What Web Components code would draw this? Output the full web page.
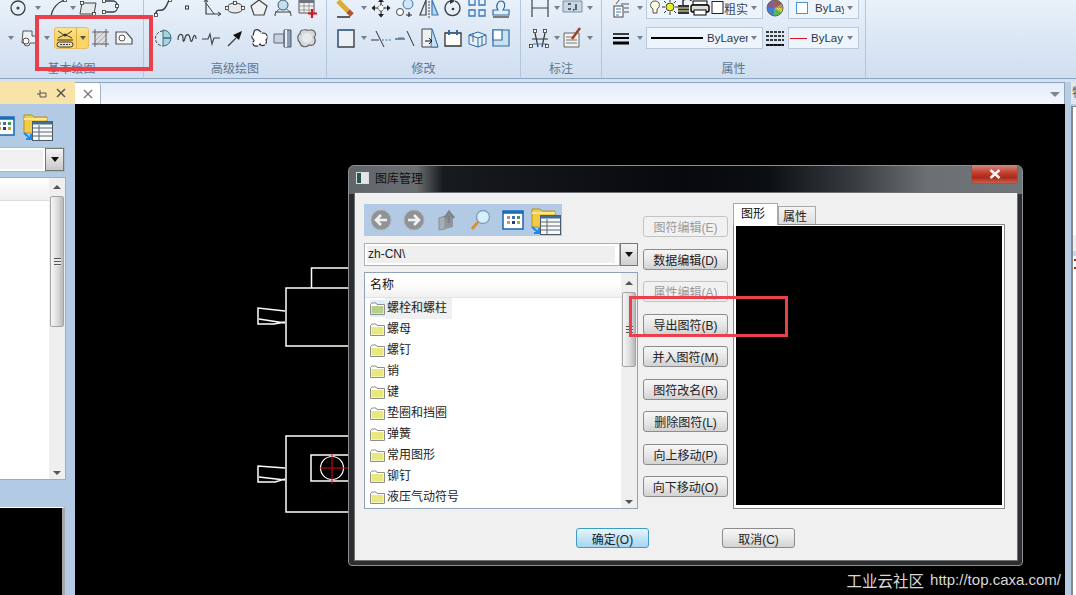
<!DOCTYPE html>
<html lang="zh-CN">
<head>
<meta charset="utf-8">
<title>CAXA</title>
<style>
  html, body { margin: 0; height: 100%; overflow: hidden; background: #000; }
  body { font: 12px "Liberation Sans", "Noto Sans CJK SC", sans-serif; }
</style>
</head>
<body>
<cad-app></cad-app>
<script>
const N = 'stroke="#3c3f44" fill="none"';
const B = 'stroke="#3a77b4" fill="none"';
const nodes = (pts) => pts.map(p => `<rect x="${p[0]-1.5}" y="${p[1]-1.5}" width="3" height="3" fill="#fff" stroke="#333" stroke-width=".8"/>`).join("");
const wedge = (a, b, c) => {
  const r = Math.PI / 180, x = (d) => (11 + 8 * Math.cos(d * r)).toFixed(1), y = (d) => (11 + 8 * Math.sin(d * r)).toFixed(1);
  return `<path d="M11 11L${x(a)} ${y(a)}A8 8 0 0 1 ${x(b)} ${y(b)}Z" fill="${c}"/>`;
};

// ribbon and dialog icons, all on a 22x22 box
const ICONS = {
  nick: `<path d="M0 6L5 1" ${N}/>`,
  circle: `<circle cx="11" cy="11" r="7" ${N} stroke-width="1.3"/><circle cx="11" cy="11" r="1.6" fill="#444"/>`,
  arc: `<path d="M4 20C5 11 11 5 18 3" ${N} stroke-width="1.3"/>${nodes([[18,3]])}`,
  rect: `<path d="M5 6H19L17 17H3Z" fill="#e6e9ec" stroke="#444"/>${nodes([[5,6],[17,17]])}`,
  hook: `<path d="M4 4H12C18 4 18 15 12 15H5" ${N} stroke-width="1.3"/>${nodes([[3,4],[16,9],[3,15]])}`,
  region: `<path d="M6 4H15V9H19V16H13A3 3 0 0 1 7 16H5Z" fill="#eef1f3" stroke="#555"/><circle cx="9" cy="14" r="3" fill="#fff" stroke="#555"/>`,
  hatch: `<path d="M5 4H18V18H5Z" fill="#dcdce0"/><path d="M5 10L11 4M5 15L16 4M7 18L18 7M12 18L18 12" stroke="#999" stroke-width=".7"/><path d="M3 5H20M3 17H20M6 2V20M17 2V20" stroke="#444" stroke-width=".8"/>`,
  boundary: `<path d="M4 5H14L20 12V17H4Z" fill="#f4f5f6" stroke="#555" stroke-width="1.2"/><circle cx="10" cy="11" r="3" fill="#fff" stroke="#555"/>`,
  bolts: `<path d="M4 3L10 7L4 10M18 3L12 7L18 10" ${N}/><circle cx="11" cy="7" r="1.5" fill="#333"/><path d="M3 12H19" stroke="#333"/><rect x="3" y="14" width="16" height="5" rx="2.5" fill="#f3e4a8" stroke="#333"/><path d="M6 16.500H16" stroke="#333" stroke-dasharray="2 1"/>`,
  spline: `<path d="M3 19C5 8 9 17 13 11S15 5 18 3" ${N} stroke-width="1.4"/>${nodes([[4,18],[18,3]])}`,
  dot: `<rect x="9.500" y="9" width="3" height="3" fill="#fff" stroke="#333"/>`,
  axes: `<path d="M6 3V17H20" ${N} stroke-width="1.2"/><path d="M6 6L14 17" ${N}/><path d="M4 5L6 2L8 5M18 15L21 17L18 19" ${N}/>`,
  ellipse: `<ellipse cx="11" cy="11" rx="8" ry="5" fill="#e7eaec" stroke="#444"/>${nodes([[3,11],[19,11],[11,6]])}`,
  pentagon: `<path d="M11 3L19 9L16 18H6L3 9Z" fill="#eef1f2" stroke="#444" stroke-width="1.2"/>`,
  cone: `<circle cx="11" cy="8" r="5" fill="#bfe0ec" stroke="#456"/><path d="M3 19C3 13 7 14 7 12M19 19C19 13 15 14 15 12M3 15H19" ${N}/>`,
  tablePlus: `<path d="M3 2H18V16H3Z" fill="#f1f1f1" stroke="#555"/><path d="M3 2H18V6H3Z" fill="#70747c"/><path d="M3 9H18M3 13H18M8 6V16M13 6V16" stroke="#888" stroke-width=".8"/><path d="M16 12V21M12 16.500H21" stroke="#d8141e" stroke-width="2.200"/>`,
  pie: `<path d="M11 4A7.500 7.500 0 1 0 11 19" ${N} stroke-dasharray="3 1.500"/><path d="M11 11H19A8 8 0 0 1 11 19Z M11 11V3A8 8 0 0 1 19 11Z" fill="#a8d5da" stroke="#3a6f8c"/>`,
  wave: `<path d="M2 13C2 6 7 6 7 11S8 15 9 11S13 6 14 11S16 15 17 11S20 8 20 12" ${N} stroke-width="1.2"/>`,
  pulse: `<path d="M2 12H8L10 7L12 17L14 11H20" ${N} stroke-width="1.1"/>`,
  arrow: `<path d="M4 19L12 11" ${N} stroke-width="1.2"/><path d="M18 4L15 13L9 8Z" fill="#111"/>`,
  blob: `<path d="M7 3C12 1 13 7 15 6C20 6 20 12 18 13C20 17 14 21 12 17C9 21 4 19 5 15C8 13 3 12 4 9C6 9 5 5 7 3Z" fill="#fff" stroke="#333" stroke-width="1.2" stroke-dasharray="7 1"/>`,
  cylinder: `<path d="M2 7H12V16H2Z" fill="#c6d4e0" stroke="#667"/><path d="M12 3H19V20H12Z" fill="#8aa1b5" stroke="#556"/><path d="M14 3V20" stroke="#e7eef4" stroke-width="2"/>`,
  cloud: `<path d="M7 3C11 2 12 4 14 3C19 2 21 8 18 10C21 14 18 20 13 18C10 21 5 20 4 16C1 13 1 8 4 7C4 5 5 3 7 3Z" fill="#d5d9dc" stroke="#666" stroke-width="1.2"/><circle cx="11" cy="11" r="5" fill="#e8eaec"/>`,
  eraser: `<path d="M3 4L13 14" stroke="#d8ad3c" stroke-width="5"/><path d="M13 14L17 18" stroke="#b3522e" stroke-width="5"/><path d="M2 20H15" stroke="#222" stroke-width="1.4"/>`,
  move: `<path d="M11 2V20M2 11H20" stroke="#333" stroke-width="1.2"/><path d="M8 5L11 1.500L14 5ZM8 17L11 20.500L14 17ZM5 8L1.500 11L5 14ZM17 8L20.500 11L17 14Z" fill="#222"/><circle cx="11" cy="11" r="3" fill="#fff" stroke="#444" stroke-dasharray="1.500 1"/>`,
  scale: `<circle cx="14" cy="7" r="5" fill="#d4e6f5" stroke="#3a77b4"/><circle cx="6" cy="15" r="3.500" fill="#fff" stroke="#444"/><path d="M12 18H18M15 15V20" stroke="#222" stroke-width="1.2"/>`,
  mirror: `<path d="M8 3V18L2 18Z" fill="none" stroke="#444" stroke-width="1.2"/><path d="M11 1V21" stroke="#444" stroke-dasharray="2 1"/><path d="M14 3V18L20 18Z" fill="#b9d6ee" stroke="#3a77b4" stroke-width="1.2"/>`,
  rotate: `<path d="M13 4A7.500 7.500 0 1 1 8 4" ${N} stroke-width="1.3"/><path d="M8 1L13 4L8 7" fill="#333"/><circle cx="11" cy="12" r="1.300" fill="#333"/>`,
  array: `<path d="M3 2H9V8H3ZM13 2H19V8H13ZM3 13H9V19H3ZM13 13H19V19H13Z" ${B} stroke-width="1.3"/>`,
  stamp: `<path d="M3 18V13H8C5 9 8 4 11 4C15 4 16 9 13 13H19V18Z" fill="none" stroke="#2f6aa8" stroke-width="1.2"/><path d="M3 20H19" stroke="#333" stroke-width="1.200"/>`,
  frame: `<path d="M3 3H19V20H3Z" fill="#eaf0f3"/><path d="M3 3H19V20H3Z" fill="none" stroke="#3a3f44" stroke-width="1.4"/><path d="M3 3H19M3 3V20" stroke="#3a77b4" stroke-width="1.600" stroke-dasharray="2 1"/>`,
  trim: `<path d="M1 13H9" stroke="#333"/><path d="M12 13H21" stroke="#3a77b4" stroke-dasharray="2 1.500"/><path d="M6 4L14 20" stroke="#333"/>`,
  extend: `<path d="M1 12H11" stroke="#333"/><path d="M13 4L20 19" stroke="#333"/><path d="M4 11H10" stroke="#3a77b4"/>`,
  docArrow: `<path d="M4 2H14L20 20H4Z" fill="#eef1f2" stroke="#3d3f44"/><path d="M14 2L20 20H13Z" fill="#c8e0ee" stroke="#3a77b4"/><path d="M7 14H14M11 11L14 14L11 17" stroke="#111" fill="none"/>`,
  ticks: `<path d="M3 6H19V19H3Z" fill="#fff" stroke="#333" stroke-width="1.3"/><path d="M7 3V8M15 3V8" stroke="#2b6cb0" stroke-width="2"/>`,
  box3d: `<path d="M3 8L12 5L20 8V17L12 20L3 17Z" fill="#e8f0f5" stroke="#2f6aa8"/><path d="M3 8L12 11V20M12 11L20 8M7 6V15M16 9V18" stroke="#2f6aa8" fill="none"/>`,
  panes: `<path d="M3 3H19V19H3Z" fill="#c8e2ef" stroke="#2f6aa8" stroke-width="1.200"/><path d="M3 3H12V13H3Z" fill="#fff" stroke="#2f6aa8" stroke-width="1.200"/>`,
  dim: `<path d="M3 3V20M19 3V20" stroke="#444" stroke-width="1.200"/><path d="M3 11H19" stroke="#444"/>`,
  dimBox: `<path d="M1 4H20V15H1Z" fill="#c9d6e3" stroke="#7f8fa0"/><path d="M6 7H9M6 12H9M14 7V13" stroke="#26384a" stroke-width="1.400"/><rect x="11" y="12" width="1.500" height="1.500" fill="#26384a"/>`,
  crossDots: `<path d="M6 6L9 20M16 6L13 20M3 12H19" stroke="#333" stroke-width="1.200" fill="none"/><path d="M4 17H18" stroke="#3a77b4"/>${nodes([[6,4],[16,4],[2,19],[18,19]])}`,
  note: `<path d="M2 6H17V20H2Z" fill="#f1f1ed" stroke="#666"/><path d="M4 10H13M4 13H15M4 16H15" stroke="#777"/><path d="M18 1L10 12" stroke="#a33f2b" stroke-width="2.500"/>`,
  listIcon: `<rect x="4" y="9" width="9" height="11" fill="#fff" stroke="#444"/><path d="M6 12H11M6 15H11M6 18H9" stroke="#3a77b4"/><path d="M6 7L10 2M11 7H19M14 11H19M14 15H19" stroke="#555" fill="none"/>`,
  widths: `<path d="M3 7H19" stroke="#000" stroke-width="1.500"/><path d="M3 11H19" stroke="#000" stroke-width="2"/><path d="M3 16H19" stroke="#000" stroke-width="3"/>`,
  wheel: `${wedge(180,255,"#9a3ab0")}${wedge(255,330,"#c63a3a")}${wedge(330,395,"#e8c43a")}${wedge(35,100,"#58b848")}${wedge(100,180,"#3f7fd4")}<circle cx="11" cy="11" r="8" fill="none" stroke="#666"/><path d="M3 11A8 8 0 0 1 19 11" fill="#777" opacity=".55"/>`,
  ltype: `<path d="M2 5H20M2 9H20M2 13H20M2 18H20" stroke="#000" stroke-width="1.300" stroke-dasharray="3 1"/><path d="M2 18H20" stroke="#000" stroke-width="1.500"/>`,
  back: `<circle cx="11" cy="11" r="10" fill="#8f9398"/><circle cx="11" cy="11" r="10" fill="none" stroke="#aeb2b6"/><path d="M6 11H17M11 6L6 11L11 16" fill="none" stroke="#f1f1f1" stroke-width="2.600"/>`,
  forward: `<circle cx="11" cy="11" r="10" fill="#8f9398"/><circle cx="11" cy="11" r="10" fill="none" stroke="#aeb2b6"/><path d="M5 11H16M11 6L16 11L11 16" fill="none" stroke="#f1f1f1" stroke-width="2.600"/>`,
  upDoc: `<path d="M3 9L9 7V20L3 21Z" fill="#a8adb4" stroke="#8a8e94"/><path d="M9 7H17V18L9 20Z" fill="#8f959c"/><path d="M13 14V6M9 9L13 3L18 9" fill="none" stroke="#7c8289" stroke-width="2.600"/>`,
  magnifier: `<circle cx="14" cy="8" r="6.500" fill="#d7eefb" stroke="#7a9fbe" stroke-width="1.300"/><path d="M9 13L3 20" stroke="#e08c2a" stroke-width="2.800"/>`,
  gridWin: `<path d="M1 2H21V20H1Z" fill="#fff" stroke="#1668b0" stroke-width="1.500"/><path d="M1 3.500H21" stroke="#1668b0" stroke-width="2.500"/><path d="M5 7H8V10H5Z" fill="#a08fa0"/><path d="M10 7H13V10H10Z" fill="#3d70b0"/><path d="M15 7H18V10H15Z" fill="#3c9a50"/><path d="M5 12H8V15H5Z" fill="#c89a60"/><path d="M10 12H13V15H10Z" fill="#243c80"/><path d="M15 12H18V15H15Z" fill="#c8a040"/>`
};
const FOLDER_TABLE = `<svg width="30" height="30" viewBox="0 0 30 30"><path d="M1 4H9L11 6H24V22H1Z" fill="#f4cb45" stroke="#b3902a"/><path d="M1 8H24" stroke="#fbe88e" stroke-width="2"/><rect x="9.500" y="10.500" width="20" height="19" fill="#f8f8f8" stroke="#4a5a68"/><path d="M9.500 12H29.500" stroke="#3f6f96" stroke-width="3"/><path d="M10 17H29M10 21H29M10 25H29M16 14V29" stroke="#5a6670"/><path d="M1 22L8 28M8 23V28H3" fill="none" stroke="#1e88e8" stroke-width="2"/></svg>`;
const icon = (name) => `<svg width="22" height="22" viewBox="0 0 22 22" style="flex:none;display:block">${ICONS[name] || ""}</svg>`;

class RibbonGroup extends HTMLElement {
  connectedCallback() {
    const shadow = this.attachShadow({ mode: "open" });
    shadow.innerHTML = `
      <style>
        :host { display: flex; flex-direction: column; flex: none; box-sizing: border-box; height: 78px;
          padding-left: var(--pad, 7px); border-right: 1px solid #b4c6da; }
        .rows { display: flex; flex-direction: column; gap: 8px; margin-top: -3px; }
        .label { margin-top: auto; height: 20px; line-height: 20px; margin-left: calc(0px - var(--pad, 7px));
          text-align: center; color: #5f7691; font-size: 12px; font-family: "Noto Sans CJK SC", sans-serif; }
      </style>
      <div class="rows"><slot></slot></div>
      <div class="label">${this.getAttribute("label")}</div>`;
  }
}

class RibbonRow extends HTMLElement {
  connectedCallback() {
    this.attachShadow({ mode: "open" }).innerHTML = `
      <style>:host { display: flex; align-items: center; height: 22px; }</style><slot></slot>`;
  }
}

class ToolBtn extends HTMLElement {
  connectedCallback() {
    const w = this.getAttribute("w") || 24;
    this.attachShadow({ mode: "open" }).innerHTML = `
      <style>:host { display: flex; align-items: center; justify-content: center; flex: none; width: ${w}px; height: 22px; }</style>
      ${icon(this.getAttribute("icon"))}`;
  }
}

class RibbonArrow extends HTMLElement {
  connectedCallback() {
    const w = this.getAttribute("w") || 11;
    this.attachShadow({ mode: "open" }).innerHTML = `
      <style>
        :host { display: flex; align-items: center; justify-content: center; flex: none; width: ${w}px; height: 22px; }
        i { border: 3.5px solid transparent; border-top: 4px solid #77808c; border-bottom: 0; }
      </style><i></i>`;
  }
}

class SplitBtn extends HTMLElement {
  connectedCallback() {
    this.attachShadow({ mode: "open" }).innerHTML = `
      <style>
        :host { display: flex; flex: none; width: 35px; height: 22px; box-sizing: border-box; border: 1px solid #e2bd62;
          border-radius: 3px; background: linear-gradient(#fde48e, #fcd360 50%, #fbd565); }
        .a { width: 22px; display: flex; justify-content: center; border-right: 1px solid #d9ae4e; margin-left: -1px; }
        .b { flex: 1; display: flex; align-items: center; justify-content: center; }
        i { border: 3.5px solid transparent; border-top: 4px solid #555; border-bottom: 0; }
      </style>
      <div class="a">${icon(this.getAttribute("icon"))}</div><div class="b"><i></i></div>`;
  }
}

class RibbonCombo extends HTMLElement {
  connectedCallback() {
    const w = this.getAttribute("w");
    this.attachShadow({ mode: "open" }).innerHTML = `
      <style>
        :host { display: flex; align-items: center; flex: none; box-sizing: border-box; width: ${w}px; height: 22px;
          border: 1px solid #b9c9dc; background: #eef4fb; color: #2b3a4c; font-size: 11.500px; overflow: hidden; position: relative; }
        .arrow { position: absolute; right: 2px; top: 0; bottom: 0; width: 12px; display: flex; align-items: center; justify-content: center; background: #eef4fb; }
        i { border: 3px solid transparent; border-top: 4px solid #77808c; border-bottom: 0; }
      </style>
      <slot></slot><div class="arrow"><i></i></div>`;
  }
}

class CadRibbon extends HTMLElement {
  connectedCallback() {
    this.attachShadow({ mode: "open" }).innerHTML = `
      <style>
        :host { display: flex; flex: none; height: 79px; box-sizing: border-box; border-bottom: 1px solid #8ea5bf; overflow: hidden;
          background: linear-gradient(#e9f1fa, #dde8f5 45%, #cfdef0); }
      </style><slot></slot>`;
  }
}

class VScroll extends HTMLElement {
  connectedCallback() {
    const t = this.getAttribute("thumb") || 70;
    this.attachShadow({ mode: "open" }).innerHTML = `
      <style>
        :host { display: flex; flex-direction: column; flex: none; width: 16px; background: #efefef; }
        .btn { display: flex; align-items: center; justify-content: center; height: ${this.getAttribute("top") || 19}px; flex: none; }
        .down { height: 12px; margin-top: auto; }
        .up i { border: 4px solid transparent; border-bottom: 4px solid #555; border-top: 0; }
        .down i { border: 4px solid transparent; border-top: 4px solid #555; border-bottom: 0; }
        .thumb { height: ${t}px; box-sizing: border-box; margin: 0 1px; border: 1px solid #a4a4a4; border-radius: 2px;
          background: linear-gradient(90deg, #f6f6f6, #dcdcdc 55%, #b8b8b8); display: flex; align-items: center; justify-content: center; }
        .grip { width: 7px; height: 8px; background: repeating-linear-gradient(#555 0 1px, #e8e8e8 1px 3px); }
      </style>
      <div class="btn up"><i></i></div>
      <div class="thumb"><div class="grip"></div></div>
      <div class="btn down"><i></i></div>`;
  }
}

class SidePanel extends HTMLElement {
  connectedCallback() {
    this.attachShadow({ mode: "open" }).innerHTML = `
      <style>
        :host { display: flex; flex-direction: column; flex: none; width: 75px; height: 513px; background: #b3cae4; box-sizing: border-box; overflow: hidden; }
        .title { flex: none; height: 22px; display: flex; align-items: center; justify-content: flex-end; gap: 9px; padding-right: 9px; background: #f8e3a8; color: #555; }
        .tools { flex: none; height: 43px; display: flex; align-items: center; gap: 8px; }
        .tools .g { margin-left: -7px; }
        .combo { flex: none; display: flex; height: 25px; width: 65px; box-sizing: border-box; background: #fff; border: 1px solid #a9b6c6; border-left: 0; }
        .combo .f { flex: 1; margin: 2px 2px 2px 0; background: #f0f0f0; }
        .combo .b { width: 17px; display: flex; align-items: center; justify-content: center; background: linear-gradient(#f4f4f4, #c8c8c8); border: 1px solid #777; }
        .combo i { border: 4.5px solid transparent; border-top: 5px solid #111; border-bottom: 0; }
        .list { flex: none; margin-top: 5px; width: 66px; height: 303px; box-sizing: border-box; display: flex; border: 1px solid #9eacbd; border-left: 0; background: #fff; }
        .list .c { flex: 1; }
        .list .h { height: 22px; background: linear-gradient(#fff, #eee); border-bottom: 1px solid #ddd; }
        .under { flex: 1; margin-top: 27px; width: 62px; background: #000; border-top: 1px solid #fff; border-right: 3px solid #a6a6a6; }
      </style>
      <div class="title">
        <svg width="11" height="11" viewBox="0 0 11 11"><path d="M1 6H4M4 2V9H10V5H4" fill="none" stroke="#555"/></svg>
        <svg width="10" height="10" viewBox="0 0 10 10"><path d="M1 1L9 9M9 1L1 9" stroke="#555" stroke-width="1.500"/></svg>
      </div>
      <div class="tools"><span class="g">${icon("gridWin")}</span>${FOLDER_TABLE}</div>
      <div class="combo"><div class="f"></div><div class="b"><i></i></div></div>
      <div class="list"><div class="c"><div class="h"></div></div><v-scroll thumb="131" top="18"></v-scroll></div>
      <div class="under"></div>`;
  }
}

class DlgButton extends HTMLElement {
  connectedCallback() {
    const w = this.getAttribute("w") || 85;
    const off = this.hasAttribute("off"), def = this.hasAttribute("default");
    const h = this.getAttribute("h") || 21;
    this.attachShadow({ mode: "open" }).innerHTML = `
      <style>
        :host { display: flex; align-items: center; justify-content: center; flex: none; box-sizing: border-box; width: ${w}px; height: ${h}px;
          border-radius: 3px; font-size: 12px; white-space: nowrap;
          border: 1px solid ${def ? "#3d9cc9" : off ? "#c4c4c4" : "#8c8c8c"};
          color: ${off ? "#9a9a9a" : "#222"};
          background: ${def ? "linear-gradient(#eaf6fd, #c3e4f6 50%, #a6d6f1)" : off ? "#f1f1f1" : "linear-gradient(#f6f6f6, #e8e8e8 50%, #d2d2d2)"}; }
      </style><slot></slot>`;
  }
}

class FolderRow extends HTMLElement {
  connectedCallback() {
    const sel = this.hasAttribute("selected");
    this.attachShadow({ mode: "open" }).innerHTML = `
      <style>
        :host { display: flex; align-items: center; height: 21px; padding-left: 5px; flex: none; color: #222; font-size: 12px; }
        .i { display: flex; padding: 2px 0; ${sel ? "background:#e2eef7;" : ""} }
        .t { padding: 0 5px 0 2px; height: 21px; line-height: 21px; ${sel ? "background:#f0f0f0;" : ""} }
      </style>
      <div class="i"><svg width="15" height="13" viewBox="0 0 15 13"><path d="M.5 2.500L2 1H6L7 2.500H14.500V12.500H.5Z" fill="#fff" stroke="#8e8e8e"/><rect x="1.500" y="4" width="12" height="7.500" fill="${sel ? "#b5d08a" : "#e9e77f"}"/></svg></div>
      <div class="t"><slot></slot></div>`;
  }
}

class LibDialog extends HTMLElement {
  connectedCallback() {
    this.attachShadow({ mode: "open" }).innerHTML = `
      <style>
        :host { position: absolute; left: 273px; top: 61px; width: 675px; height: 401px; box-sizing: border-box; display: flex; flex-direction: column;
          padding: 0 5px 5px 6px; border: 1px solid #8b8f93; border-radius: 6px 6px 4px 4px; font-size: 12px;
          background: linear-gradient(90deg, #60656a 0, #6b6f72 10%, #181b1e 14%, #07090c 50%, #0c0f12 62%, #34383c 74%, #6c7073 86%, #70757a 100%) top / 100% 28px no-repeat, #2c2e30; }
        .bar { flex: none; box-sizing: border-box; height: 27px; padding-bottom: 4px; display: flex; align-items: center; gap: 6px; margin-left: 1px; position: relative; color: #111; font-family: "Noto Sans CJK SC", sans-serif; }
        .winicon { width: 11px; height: 10px; background: linear-gradient(90deg, #27584f 40%, #e4e4e4 40%); border: 1px solid #ddd; }
        .close { position: absolute; right: -1px; top: -1px; width: 47px; height: 19px; box-sizing: border-box; border: 1px solid #8f5a55; border-top: 0; border-radius: 0 0 4px 4px;
          background: linear-gradient(#cf8a80, #c43c2c 45%, #a92a1c 70%, #c9604a); display: flex; align-items: center; justify-content: center; }
        .client { flex: 1; background: #f0f0f0; box-shadow: 0 0 0 1px #6e7174; padding: 11px 0 0 9px; display: flex; flex-direction: column; min-height: 0; }
        .main { display: flex; height: 305px; flex: none; }
        .left { width: 274px; display: flex; flex-direction: column; flex: none; }
        .tb { height: 32px; width: 198px; background: #b3cae4; display: flex; align-items: center; flex: none; }
        .tb span { display: flex; justify-content: center; width: 33px; flex: none; }
        .combo { margin-top: 7px; height: 23px; display: flex; flex: none; }
        .combo .f { flex: 1; box-sizing: border-box; border: 1px solid #a8b0ba; background: #fff; padding: 2px; display: flex; }
        .combo .f b { flex: 1; font-weight: normal; background: #efefef; line-height: 16px; padding-left: 1px; color: #222; margin-right: 2px; }
        .combo .b { width: 18px; box-sizing: border-box; border: 1px solid #777; background: linear-gradient(#f4f4f4, #cfcfcf); display: flex; align-items: center; justify-content: center; }
        .combo i { border: 4px solid transparent; border-top: 5px solid #111; border-bottom: 0; }
        .list { margin-top: 6px; height: 237px; box-sizing: border-box; border: 1px solid #8fa2b6; background: #fff; display: flex; flex: none; overflow: hidden; }
        .c { flex: 1; display: flex; flex-direction: column; }
        .h { height: 25px; flex: none; box-sizing: border-box; padding-left: 5px; line-height: 25px; background: linear-gradient(#fff, #fff 40%, #f1f1f1); border-bottom: 1px solid #e4e4e4; color: #111; font-size: 12px; }
        .mid { display: flex; flex-direction: column; gap: 11.500px; width: 85px; margin-left: 5px; padding-top: 12px; flex: none; }
        .right { display: flex; flex-direction: column; width: 272px; margin-left: 5px; flex: none; }
        .tabs { display: flex; height: 20px; flex: none; align-items: flex-end; }
        .tab { box-sizing: border-box; display: flex; align-items: center; justify-content: center; border: 1px solid #a8a8a8; border-bottom: 0; }
        .tab.on { width: 45px; height: 22px; background: #fff; position: relative; z-index: 1; margin-bottom: -1px; color: #111; padding: 0 5px 4px 0; }
        .tab.off { width: 38px; height: 18px; background: linear-gradient(#f5f5f5, #dcdcdc); color: #222; padding-right: 4px; }
        .view { flex: 1; box-sizing: border-box; border: 1px solid #8a8a8a; background: #fff; padding: 1px 2px 3px 2px; display: flex; }
        .view div { flex: 1; background: #000; }
        .foot { display: flex; margin: 19px 0 0 212px; gap: 73px; }
      </style>
      <div class="bar"><div class="winicon"></div>图库管理
        <div class="close"><svg width="14" height="10" viewBox="0 0 14 10"><path d="M2.500 1L11.500 9M11.500 1L2.500 9" stroke="#f4f4f4" stroke-width="2.600"/></svg></div>
      </div>
      <div class="client">
        <div class="main">
          <div class="left">
            <div class="tb">
              <span>${icon("back")}</span><span>${icon("forward")}</span><span>${icon("upDoc")}</span><span>${icon("magnifier")}</span><span>${icon("gridWin")}</span><span>${FOLDER_TABLE}</span>
            </div>
            <div class="combo"><div class="f"><b>zh-CN\\</b></div><div class="b"><i></i></div></div>
            <div class="list">
              <div class="c">
                <div class="h">名称</div>
                <folder-row selected>螺栓和螺柱</folder-row>
                <folder-row>螺母</folder-row>
                <folder-row>螺钉</folder-row>
                <folder-row>销</folder-row>
                <folder-row>键</folder-row>
                <folder-row>垫圈和挡圈</folder-row>
                <folder-row>弹簧</folder-row>
                <folder-row>常用图形</folder-row>
                <folder-row>铆钉</folder-row>
                <folder-row>液压气动符号</folder-row>
              </div>
              <v-scroll thumb="75" top="19"></v-scroll>
            </div>
          </div>
          <div class="mid">
            <dlg-button off>图符编辑(E)</dlg-button>
            <dlg-button>数据编辑(D)</dlg-button>
            <dlg-button off>属性编辑(A)</dlg-button>
            <dlg-button>导出图符(B)</dlg-button>
            <dlg-button>并入图符(M)</dlg-button>
            <dlg-button>图符改名(R)</dlg-button>
            <dlg-button>删除图符(L)</dlg-button>
            <dlg-button>向上移动(P)</dlg-button>
            <dlg-button>向下移动(O)</dlg-button>
          </div>
          <div class="right">
            <div class="tabs"><div class="tab on">图形</div><div class="tab off">属性</div></div>
            <div class="view"><div></div></div>
          </div>
        </div>
        <div class="foot">
          <dlg-button default w="73" h="20">确定(O)</dlg-button>
          <dlg-button w="73" h="20">取消(C)</dlg-button>
        </div>
      </div>`;
  }
}

class CadCanvas extends HTMLElement {
  connectedCallback() {
    // drawing coordinates are the page's, shifted by the canvas origin
    this.attachShadow({ mode: "open" }).innerHTML = `
      <style>
        :host { display: flex; flex-direction: column; flex: 1; min-width: 0; height: 513px; }
        .strip { flex: none; height: 22px; display: flex; align-items: stretch; box-sizing: border-box; background: linear-gradient(#e2ecf8, #f3f7fc); border-top: 1px solid #8ea5bf; border-right: 1px solid #8ea5bf; position: relative; }
        .tab { width: 25px; background: #fff; border-radius: 0 3px 0 0; border-right: 1px solid #a3b4c8; display: flex; align-items: center; justify-content: center; }
        .chev { position: absolute; right: 4px; top: 9px; border: 5px solid transparent; border-top: 5px solid #7d8792; border-bottom: 0; }
        .black { flex: 1; background: #000; position: relative; overflow: hidden; }
        svg.cad { position: absolute; left: 0; top: 0; }
      </style>
      <div class="strip">
        <div class="tab"><svg width="10" height="10" viewBox="0 0 10 10"><path d="M1 1L9 9M9 1L1 9" stroke="#777" stroke-width="1.300"/></svg></div>
        <div class="chev"></div>
      </div>
      <div class="black">
        <svg class="cad" width="990" height="491" viewBox="75 104 990 491" fill="none" stroke="#fff" stroke-width="1.500">
          <path d="M348 268H311.500V288M348 288H286V346H348"/>
          <path d="M285 311L258 308V324H274L285 322M259 319L285 323"/>
          <path d="M348 436H286V512H348M348 455H311V481H348"/>
          <circle cx="332" cy="468" r="11.500" stroke-width="1.200"/>
          <path d="M285 468L258 466V482H275L285 479M259 477L285 480"/>
          <path d="M332 454V484M320 468H349" stroke="#e3001b" stroke-width="1"/>
        </svg>
        <lib-dialog></lib-dialog>
        <cad-mark></cad-mark>
      </div>`;
  }
}

class CadMark extends HTMLElement {
  connectedCallback() {
    this.attachShadow({ mode: "open" }).innerHTML = `
      <style>
        :host { position: absolute; right: 4px; bottom: 5px; color: #d8d8d8; font-size: 15px; line-height: 20px; white-space: nowrap; display: flex; gap: 6px; align-items: center; }
        b { font-weight: normal; font-size: 15.500px; font-family: "Noto Sans CJK SC", sans-serif; }
      </style><b>工业云社区</b><span>http://top.caxa.com/</span>`;
  }
}

class RightDock extends HTMLElement {
  connectedCallback() {
    this.attachShadow({ mode: "open" }).innerHTML = `
      <style>
        :host { display: flex; flex-direction: column; flex: none; width: 11px; height: 513px; background: #b8cce3; box-sizing: border-box; overflow: hidden; padding-left: 6px; color: #555; font-size: 12px; font-family: "Noto Sans CJK SC", sans-serif; }
        .tab { flex: none; height: 22px; line-height: 20px; padding-left: 1px; background: #dfe8f3; white-space: nowrap; overflow: hidden; }
        .panel { flex: 1; margin-top: 2px; background: #fff; border-left: 2px solid #85888c; border-top: 1px solid #85888c; display: flex; flex-direction: column; }
        .sp { height: 128px; flex: none; }
        .hd { height: 16px; flex: none; background: #efefef; }
        .bl { height: 5px; flex: none; background: #c6d8ee; }
        .tick { height: 2px; width: 2px; margin: 3px 0 0 1px; background: #8a2a1a; }
        .tick + .tick { margin-top: 6px; }
      </style>
      <div class="tab">特</div>
      <div class="panel"><div class="sp"></div><div class="hd"></div><div class="bl"></div><div class="tick"></div><div class="tick"></div></div>`;
  }
}

class CadApp extends HTMLElement {
  connectedCallback() {
    this.attachShadow({ mode: "open" }).innerHTML = `
      <style>
        :host { display: flex; flex-direction: column; width: 1076px; height: 595px; overflow: hidden; background: #d6e3f2; }
        .main { display: flex; flex: none; padding-top: 3px; background: linear-gradient(#d4e1f0 0 4px, #b3cae4 4px); }
      </style>
      <cad-ribbon>
        <ribbon-group label="基本绘图" style="width:144px;--pad:0px">
          <ribbon-row>
            <tool-btn icon="nick" w="6"></tool-btn><tool-btn icon="circle"></tool-btn><ribbon-arrow w="16"></ribbon-arrow>
            <tool-btn icon="arc"></tool-btn><ribbon-arrow w="6"></ribbon-arrow><tool-btn icon="rect"></tool-btn><tool-btn icon="hook"></tool-btn>
          </ribbon-row>
          <ribbon-row>
            <tool-btn icon="nick" w="6"></tool-btn><ribbon-arrow w="10"></ribbon-arrow><tool-btn icon="region"></tool-btn><ribbon-arrow w="14"></ribbon-arrow>
            <split-btn icon="bolts"></split-btn><tool-btn icon="hatch" w="22"></tool-btn><tool-btn icon="boundary"></tool-btn>
          </ribbon-row>
        </ribbon-group>
        <ribbon-group label="高级绘图" style="width:183px">
          <ribbon-row>
            <tool-btn icon="spline"></tool-btn><tool-btn icon="dot"></tool-btn><tool-btn icon="axes"></tool-btn><tool-btn icon="ellipse"></tool-btn>
            <tool-btn icon="pentagon"></tool-btn><tool-btn icon="cone"></tool-btn><tool-btn icon="tablePlus"></tool-btn>
          </ribbon-row>
          <ribbon-row>
            <tool-btn icon="pie"></tool-btn><tool-btn icon="wave"></tool-btn><tool-btn icon="pulse"></tool-btn><tool-btn icon="arrow"></tool-btn>
            <tool-btn icon="blob"></tool-btn><tool-btn icon="cylinder"></tool-btn><tool-btn icon="cloud"></tool-btn>
          </ribbon-row>
        </ribbon-group>
        <ribbon-group label="修改" style="width:194px">
          <ribbon-row>
            <tool-btn icon="eraser"></tool-btn><ribbon-arrow></ribbon-arrow><tool-btn icon="move"></tool-btn><tool-btn icon="scale"></tool-btn>
            <tool-btn icon="mirror"></tool-btn><tool-btn icon="rotate"></tool-btn><tool-btn icon="array"></tool-btn><tool-btn icon="stamp"></tool-btn>
          </ribbon-row>
          <ribbon-row>
            <tool-btn icon="frame"></tool-btn><ribbon-arrow></ribbon-arrow><tool-btn icon="trim"></tool-btn><tool-btn icon="extend"></tool-btn>
            <tool-btn icon="docArrow"></tool-btn><tool-btn icon="ticks"></tool-btn><tool-btn icon="box3d"></tool-btn><tool-btn icon="panes"></tool-btn>
          </ribbon-row>
        </ribbon-group>
        <ribbon-group label="标注" style="width:81px">
          <ribbon-row>
            <tool-btn icon="dim"></tool-btn><ribbon-arrow w="9"></ribbon-arrow><tool-btn icon="dimBox"></tool-btn><ribbon-arrow w="9"></ribbon-arrow>
          </ribbon-row>
          <ribbon-row>
            <tool-btn icon="crossDots"></tool-btn><ribbon-arrow w="9"></ribbon-arrow><tool-btn icon="note"></tool-btn><ribbon-arrow w="9"></ribbon-arrow>
          </ribbon-row>
        </ribbon-group>
        <ribbon-group label="属性" style="width:264px">
          <ribbon-row>
            <tool-btn icon="listIcon"></tool-btn><ribbon-arrow w="13"></ribbon-arrow>
            <ribbon-combo w="117"><layer-state></layer-state></ribbon-combo>
            <tool-btn icon="wheel" w="23"></tool-btn>
            <ribbon-combo w="71" style="margin-left:2px"><line-value swatch="box">ByLay</line-value></ribbon-combo>
          </ribbon-row>
          <ribbon-row>
            <tool-btn icon="widths"></tool-btn><ribbon-arrow w="13"></ribbon-arrow>
            <ribbon-combo w="117"><line-value swatch="thick">ByLayer</line-value></ribbon-combo>
            <tool-btn icon="ltype" w="23"></tool-btn>
            <ribbon-combo w="71" style="margin-left:2px"><line-value swatch="red">ByLay</line-value></ribbon-combo>
          </ribbon-row>
        </ribbon-group>
      </cad-ribbon>
      <div class="main">
        <side-panel></side-panel>
        <cad-canvas></cad-canvas>
        <right-dock></right-dock>
      </div>
      <red-mark style="left:35px;top:15px;width:118px;height:56px;border-width:4px"></red-mark>
      <red-mark style="left:629px;top:296px;width:159px;height:41px"></red-mark>`;
  }
}

class LayerState extends HTMLElement {
  connectedCallback() {
    this.attachShadow({ mode: "open" }).innerHTML = `
      <style>
        :host { display: flex; align-items: center; height: 20px; font-family: "Noto Sans CJK SC", sans-serif; font-size: 12px; color: #3b4a5c; }
        svg { flex: none; display: block; }
      </style>
      <svg width="77" height="20" viewBox="0 0 77 20">
        <path d="M8 3C3 3 2 9 6 11V15H10V11C14 9 13 3 8 3Z" fill="#fffbe0" stroke="#555"/>
        <circle cx="23" cy="9" r="4" fill="#e8f020" stroke="#444"/><path d="M23 1V4M23 14V17M15 9H18M28 9H31M17 3L19 5M27 13L29 15M29 3L27 5M19 13L17 15" stroke="#333"/>
        <path d="M31 7H42V16H31Z" fill="#333"/><path d="M33 7V3C33 1 41 0 41 3" fill="none" stroke="#333" stroke-width="1.500" transform="translate(3)"/><path d="M31 10H42M31 13H42" stroke="#f0f0a8"/>
        <rect x="46" y="3" width="14" height="4" fill="#fff" stroke="#000"/><rect x="44" y="7" width="18" height="7" rx="2" fill="#ddd" stroke="#000" stroke-width="1.400"/><rect x="47" y="12" width="12" height="5" fill="#fff" stroke="#000"/>
        <rect x="65" y="3.500" width="11" height="12" fill="#fff" stroke="#222"/>
      </svg><span>粗实</span>`;
  }
}

class LineValue extends HTMLElement {
  connectedCallback() {
    const s = this.getAttribute("swatch");
    const parts = {
      box: `<i style="width:10px;height:10px;border:1px solid #4a90d0;background:#fff;margin:0 7px 0 7px"></i>`,
      thick: `<i style="width:52px;height:2px;background:#000;margin:0 4px 0 4px"></i>`,
      red: `<i style="width:17px;height:1px;background:#d8141e;margin:0 4px 0 1px"></i>`
    };
    this.attachShadow({ mode: "open" }).innerHTML = `
      <style>:host { display: flex; align-items: center; height: 20px; white-space: nowrap; color: #2b3a4c; } i { flex: none; display: block; }</style>
      ${parts[s]}<slot></slot>`;
  }
}

class RedMark extends HTMLElement {
  connectedCallback() {
    this.attachShadow({ mode: "open" }).innerHTML = `
      <style>:host { position: absolute; display: block; box-sizing: border-box; border: 3px solid #e9404b; pointer-events: none; }</style>`;
  }
}

customElements.define("ribbon-group", RibbonGroup);
customElements.define("ribbon-row", RibbonRow);
customElements.define("tool-btn", ToolBtn);
customElements.define("ribbon-arrow", RibbonArrow);
customElements.define("split-btn", SplitBtn);
customElements.define("ribbon-combo", RibbonCombo);
customElements.define("cad-ribbon", CadRibbon);
customElements.define("v-scroll", VScroll);
customElements.define("side-panel", SidePanel);
customElements.define("dlg-button", DlgButton);
customElements.define("folder-row", FolderRow);
customElements.define("lib-dialog", LibDialog);
customElements.define("cad-canvas", CadCanvas);
customElements.define("cad-mark", CadMark);
customElements.define("right-dock", RightDock);
customElements.define("layer-state", LayerState);
customElements.define("line-value", LineValue);
customElements.define("red-mark", RedMark);
customElements.define("cad-app", CadApp);
</script>
</body>
</html>
